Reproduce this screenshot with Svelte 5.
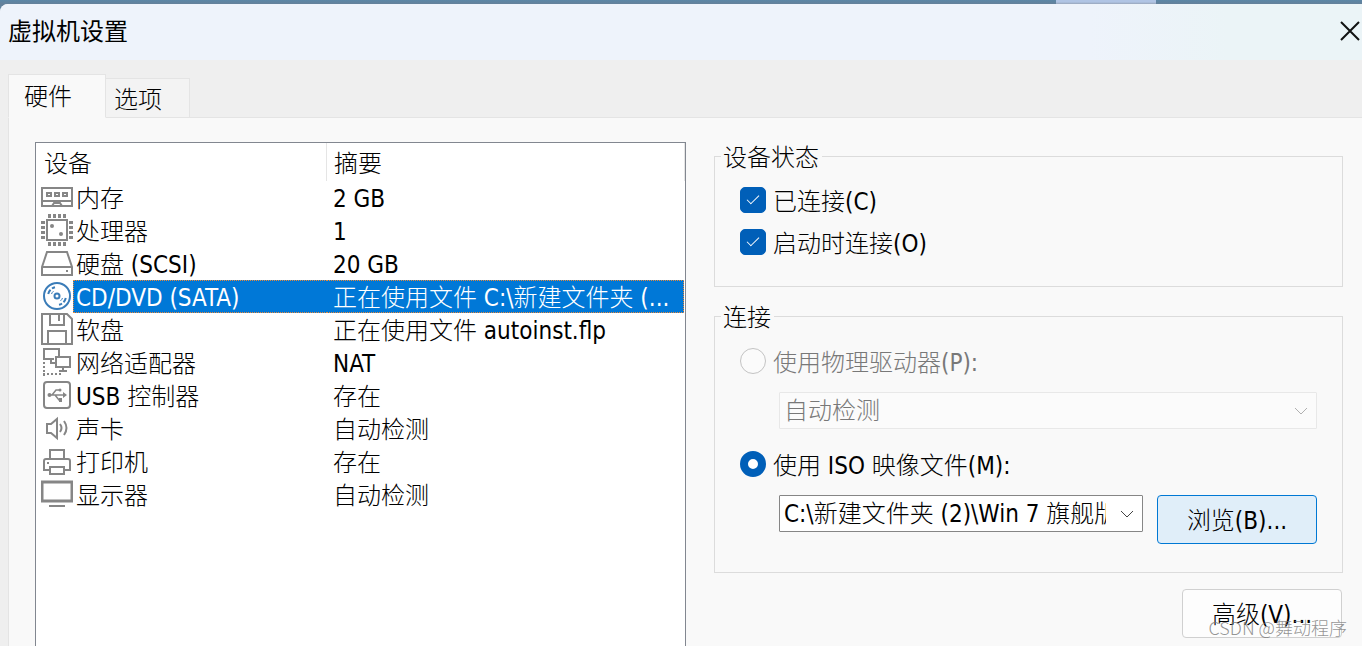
<script lang="ts">
	type Device = { icon: string; name: string; summary: string };

	const devices: Device[] = [
		{ icon: 'memory', name: '内存', summary: '2 GB' },
		{ icon: 'cpu', name: '处理器', summary: '1' },
		{ icon: 'disk', name: '硬盘 (SCSI)', summary: '20 GB' },
		{ icon: 'cd', name: 'CD/DVD (SATA)', summary: '正在使用文件 C:\\新建文件夹 (...' },
		{ icon: 'floppy', name: '软盘', summary: '正在使用文件 autoinst.flp' },
		{ icon: 'network', name: '网络适配器', summary: 'NAT' },
		{ icon: 'usb', name: 'USB 控制器', summary: '存在' },
		{ icon: 'sound', name: '声卡', summary: '自动检测' },
		{ icon: 'printer', name: '打印机', summary: '存在' },
		{ icon: 'display', name: '显示器', summary: '自动检测' }
	];

	let selected = $state('cd');
	let tab = $state('hardware');
	let connected = $state(true);
	let connectAtPowerOn = $state(true);
	let source = $state('iso');
</script>

{#snippet deviceIcon(name: string)}
	<svg class="icon" class:cd={name === 'cd'} viewBox="0 0 32 32" aria-hidden="true">
		{#if name === 'memory'}
			<path d="M1 7h30v18H1zM1 20h30M11 25l2-3h6l2 3" />
			<path d="M6 12h4v3H6zM14 12h4v3h-4zM22 12h4v3h-4z" />
		{:else if name === 'cpu'}
			<path d="M6 6h20v20H6z" />
			<path d="M7 2h18M7 30h18M2 7v18M30 7v18" stroke-width="4" stroke-dasharray="3 2" />
			<circle class="solid" cx="11" cy="12" r="2" />
			<circle class="solid" cx="20" cy="20" r="2" />
		{:else if name === 'disk'}
			<path d="M1 20L6 5h20l5 15v8H1zM1 20h30" />
			<path class="solid" d="M25 23h2v2h-2z" />
		{:else if name === 'cd'}
			<circle cx="16" cy="16" r="13" />
			<circle cx="16" cy="16" r="2.5" />
			<path d="M7.2 14A9 9 0 0 1 9.5 9.8M11 8.5A9 9 0 0 1 14 7.2M24.8 18A9 9 0 0 1 22.5 22.2M21 23.5A9 9 0 0 1 18 24.8" />
			<path d="M10.5 14A6 6 0 0 1 12.5 11.2M21.5 18A6 6 0 0 1 19.5 20.8" stroke-width="1" />
		{:else if name === 'floppy'}
			<path d="M1 1h25l5 5v25H1zM9 1v11h14V1M18 2v6M7 31V18h18v13" />
		{:else if name === 'network'}
			<path d="M13 13H3V3h15v7M10 13v4h5M15 11h14v10H15zM22 21v4M18 25h8" />
			<path d="M3 16v14M2 28h20" stroke-dasharray="2 2" />
		{:else if name === 'usb'}
			<rect x="3" y="3" width="26" height="26" rx="3" />
			<path d="M8 16h15M11 16l4-5h4M14 16l4 5h2" stroke-width="1.5" />
			<circle class="solid" cx="8.5" cy="16" r="2" />
			<circle class="solid" cx="19" cy="11" r="1.5" />
			<path class="solid" d="M22 13l4 3-4 3zM18 19h3v4h-3z" />
		{:else if name === 'sound'}
			<path d="M6 12h4l6-5v19l-6-5H6z" />
			<path d="M19 12q3 4 0 8M23 9q5 7 0 14" />
		{:else if name === 'printer'}
			<path d="M9 13V5h14v8M8 25H3V16q0-2 2-2h22q2 0 2 2v9h-5M9 22h14v7H9z" />
			<path class="solid" d="M6 17h2v2H6z" />
		{:else}
			<path d="M1 4h30v19H1z" stroke-width="3" />
			<path d="M8 28h16" />
		{/if}
	</svg>
{/snippet}

<div class="desktop">
	<div class="backdrop"><span></span></div>
	<main class="dialog">
		<header class="titlebar">
			<h1>虚拟机设置</h1>
			<button class="close" aria-label="关闭">
				<svg viewBox="0 0 20 20" aria-hidden="true"><path d="M1 1l18 18M19 1L1 19" /></svg>
			</button>
		</header>

		<div class="tabs" role="tablist">
			<button role="tab" aria-selected={tab === 'hardware'} onclick={() => (tab = 'hardware')}>硬件</button>
			<button role="tab" aria-selected={tab === 'options'} onclick={() => (tab = 'options')}>选项</button>
		</div>

		<section class="panel">
			<div class="list">
				<table>
					<thead>
						<tr><th>设备</th><th>摘要</th></tr>
					</thead>
					<tbody>
						{#each devices as device (device.icon)}
							<tr class:selected={selected === device.icon} onclick={() => (selected = device.icon)}>
								<td>
									<div class="device">
										{@render deviceIcon(device.icon)}
										<span class="name">{device.name}</span>
									</div>
								</td>
								<td><div class="summary">{device.summary}</div></td>
							</tr>
						{/each}
					</tbody>
				</table>
			</div>

			<div class="settings">
				<fieldset class="status">
					<legend>设备状态</legend>
					<label><input type="checkbox" bind:checked={connected} /><span>已连接(C)</span></label>
					<label><input type="checkbox" bind:checked={connectAtPowerOn} /><span>启动时连接(O)</span></label>
				</fieldset>

				<fieldset class="connection">
					<legend>连接</legend>
					<label class="disabled">
						<input type="radio" value="physical" bind:group={source} disabled />
						<span>使用物理驱动器(P):</span>
					</label>
					<div class="field">
						<div class="combo">
							<select aria-label="物理驱动器" disabled><option>自动检测</option></select>
							<svg class="chevron" viewBox="0 0 14 8" aria-hidden="true"><path d="M1 1l6 6 6-6" /></svg>
						</div>
					</div>
					<label class="iso">
						<input type="radio" value="iso" bind:group={source} />
						<span>使用 ISO 映像文件(M):</span>
					</label>
					<div class="field">
						<div class="combo">
							<select aria-label="ISO 映像文件"><option>C:\新建文件夹 (2)\Win 7 旗舰版</option></select>
							<svg class="chevron" viewBox="0 0 14 8" aria-hidden="true"><path d="M1 1l6 6 6-6" /></svg>
						</div>
						<button class="push focused">浏览(B)...</button>
					</div>
				</fieldset>

				<button class="push advanced">高级(V)...</button>
			</div>
		</section>
	</main>
	<div class="watermark">CSDN @舞动程序</div>
</div>

<style>
	:global(body) {
		margin: 0;
	}

	.desktop {
		position: relative;
		display: flex;
		flex-direction: column;
		height: 100vh;
		overflow: hidden;
		background: linear-gradient(#5b86a6, #64809a 4px, #5b86a6 12px);
		color: #000;
		font: 24px/28px 'DejaVu Sans Condensed', 'Noto Sans CJK SC Light', 'Noto Sans CJK SC', sans-serif;
		font-weight: 300;
	}

	button,
	select {
		font: inherit;
		color: inherit;
	}

	.backdrop {
		display: flex;
		justify-content: flex-end;
		height: 4px;
	}

	.backdrop span {
		width: 100px;
		margin-right: 206px;
		background: linear-gradient(#b0c4e4 50%, #98a5bb);
	}

	.dialog {
		flex: 1;
		display: flex;
		flex-direction: column;
		min-height: 0;
		background: #efefef;
		border-radius: 8px 0 0 0;
		overflow: hidden;
	}

	.titlebar {
		display: flex;
		align-items: center;
		justify-content: space-between;
		height: 56px;
		padding: 0 2px 2px 8px;
		box-sizing: border-box;
		background: linear-gradient(90deg, #eef3fb 80%, #ebf4f7 90%);
	}

	h1 {
		margin: 0;
		padding-bottom: 2px;
		font: 400 24px/28px 'Noto Sans CJK SC', sans-serif;
	}

	.close {
		width: 20px;
		height: 20px;
		padding: 0;
		border: 0;
		background: none;
	}

	.close svg {
		display: block;
		fill: none;
		stroke: #111;
		stroke-width: 2;
	}

	/* Tabs overlap the panel's top border by one pixel */
	.tabs {
		display: flex;
		align-items: flex-end;
		padding: 14px 0 0 8px;
		margin-bottom: -1px;
		z-index: 1;
	}

	.tabs button {
		width: 84px;
		height: 40px;
		padding: 3px 0 0 8px;
		border: 1px solid #e4e4e4;
		border-left: 0;
		background: #f3f3f3;
		text-align: left;
	}

	.tabs button[aria-selected='true'] {
		width: 98px;
		height: 44px;
		padding: 1px 0 0 15px;
		border-left: 1px solid #e4e4e4;
		border-bottom-color: #f9f9f9;
		background: #f9f9f9;
	}

	.panel {
		flex: 1;
		display: grid;
		grid-template-columns: 651fr 629fr;
		gap: 28px;
		min-height: 0;
		margin-left: 8px;
		padding: 24px 19px 0 26px;
		border: 1px solid #e4e4e4;
		border-width: 1px 0 0 1px;
		background: #f9f9f9;
	}

	.list {
		min-width: 0;
		border: 1px solid #828790;
		border-bottom: 0;
		background: #fff;
	}

	table {
		width: 100%;
		table-layout: fixed;
		border-collapse: collapse;
	}

	th {
		height: 38px;
		padding: 4px 0 0 8px;
		box-sizing: border-box;
		background: linear-gradient(#e5e5e5, #e5e5e5) right / 1px 100% no-repeat;
		font-weight: inherit;
		text-align: left;
	}

	th:first-child {
		width: 291px;
	}

	th:last-child {
		padding-left: 7px;
	}

	td {
		height: 33px;
		padding: 0;
	}

	.device {
		display: flex;
		align-items: flex-start;
		padding-left: 5px;
	}

	.icon {
		flex: none;
		width: 32px;
		height: 32px;
		fill: none;
		stroke: #868686;
		stroke-width: 2;
	}

	.icon.cd {
		stroke: #3a7cb8;
	}

	.icon .solid {
		fill: #868686;
		stroke: none;
	}

	.name,
	.summary {
		height: 33px;
		box-sizing: border-box;
		border: 1px solid transparent;
		line-height: 35px;
		white-space: nowrap;
		overflow: hidden;
	}

	.name {
		flex: 1;
		padding-left: 2px;
		border-right: 0;
	}

	.summary {
		margin-right: 1px;
		padding-left: 6px;
		border-left: 0;
	}

	.selected .name,
	.selected .summary {
		border-color: #e8893a;
		border-style: dotted;
		background: #0078d7;
		color: #fff;
	}

	.selected .name {
		border-right: 0;
	}

	.selected .summary {
		border-left: 0;
	}

	.settings {
		display: flex;
		flex-direction: column;
		min-width: 0;
	}

	fieldset {
		min-width: 0;
		margin: 0;
		border: 1px solid #dcdcdc;
	}

	.status {
		padding: 9px 25px 23px;
	}

	.connection {
		margin-top: 15px;
		padding: 10px 25px 28px;
	}

	legend {
		margin-left: -19px;
		padding: 4px 3px 0 2px;
		line-height: 24px;
	}

	label {
		display: flex;
		align-items: center;
		gap: 7px;
		height: 42px;
	}

	label span {
		padding-top: 4px;
	}

	.iso {
		margin-top: 14px;
	}

	.disabled {
		color: #787878;
	}

	input {
		appearance: none;
		flex: none;
		width: 26px;
		height: 26px;
		margin: 0;
		border: 1px solid #8a8a8a;
		background: #fff;
	}

	input[type='checkbox'] {
		display: grid;
		place-items: center;
		border-radius: 5px;
	}

	input[type='checkbox']:checked {
		border-color: #005fb8;
		background: #005fb8;
	}

	input[type='checkbox']:checked::before {
		content: '';
		width: 11px;
		height: 5px;
		margin-bottom: 4px;
		border: solid #fff;
		border-width: 0 0 1px 1px;
		rotate: -45deg;
	}

	input[type='radio'] {
		border-radius: 50%;
	}

	input[type='radio']:checked {
		border: 8px solid #005fb8;
	}

	input:disabled {
		border-color: #c3c3c3;
		background: #fbfbfb;
	}

	.field {
		display: flex;
		align-items: flex-start;
		gap: 14px;
		margin: 10px 0 0 39px;
	}

	.combo {
		position: relative;
		flex: 1;
		min-width: 0;
	}

	select {
		appearance: none;
		display: block;
		width: 100%;
		height: 37px;
		padding: 1px 36px 0 4px;
		border: 1px solid #868686;
		border-radius: 1px;
		background: #fff;
	}

	select:disabled {
		border-color: #e8e8e8;
		background: #fbfbfb;
		color: #787878;
		opacity: 1;
	}

	.chevron {
		position: absolute;
		top: 15px;
		right: 9px;
		width: 14px;
		height: 8px;
		fill: none;
		stroke: #444;
		pointer-events: none;
	}

	select:disabled + .chevron {
		stroke: #b0b0b0;
	}

	.push {
		width: 160px;
		height: 49px;
		padding: 2px 0 0;
		border: 1px solid #d0d0d0;
		border-radius: 4px;
		background: #fdfdfd;
	}

	.focused {
		border-color: #0078d4;
		background: #e0eef9;
	}

	.advanced {
		align-self: flex-end;
		margin: 16px 1px 0 0;
	}

	.watermark {
		position: absolute;
		right: 15px;
		bottom: 7px;
		color: rgba(120, 120, 120, 0.8);
		font: 300 18px/24px 'Noto Sans CJK SC', sans-serif;
		z-index: 2;
	}
</style>
